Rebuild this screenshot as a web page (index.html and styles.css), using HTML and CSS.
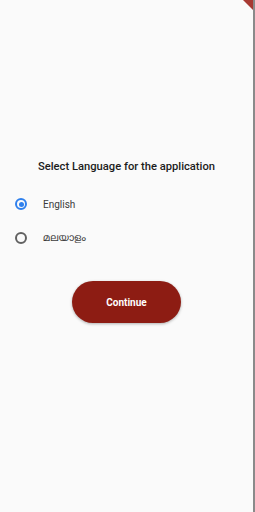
FILE: index.html
```html
<html><head><title>Select Language</title><link rel="stylesheet" href="styles.css"></head>
<body>
<div class='screen'>
  <div class='title'>Select Language for the application</div>
  <div class='options'>
    <label class='option'><span class='radio checked'></span><span class='label'>English</span></label>
    <label class='option'><span class='radio'></span><span class='label ml'>മലയാളം</span></label>
  </div>
  <div class='actions'><button class='continue'>Continue</button></div>
</div>
<div class='banner'></div>
<div class='edge'></div>
</body></html>
```

FILE: styles.css
```css
body { margin: 0; background-color: #fafafa; font-family: Roboto, 'Noto Sans', sans-serif; }
.screen { width: 253px; height: 512px; display: flex; flex-direction: column; padding-top: 159px; box-sizing: border-box; }
.title { text-align: center; font-size: 11.2px; font-weight: 500; color: #1c1c1c; height: 16px; line-height: 16px; }
.options { margin-top: 19px; display: flex; flex-direction: column; gap: 14px; }
.option { display: flex; align-items: center; height: 20px; padding-left: 15px; }
.radio {
  width: 8px; height: 8px; border-radius: 50%;
  border: 2px solid #616161; box-sizing: content-box;
  display: inline-block; position: relative;
  }
.radio.checked { border-color: #2f80ed; }
.radio.checked::after {
  content: ''; position: absolute; left: 1.5px; top: 1.5px; width: 5px; height: 5px;
  border-radius: 50%; background-color: #2f80ed;
  }
.label { margin-left: 16px; font-size: 10px; color: #3a3a3a; }
.ml { font-family: 'Noto Sans Malayalam', 'Noto Sans', sans-serif; }
.actions { margin-top: 33px; display: flex; justify-content: center; }
.continue {
  width: 109px; height: 42px; border: none; border-radius: 21px;
  background-color: #8d1c13; color: #ffffff; font-family: Roboto, sans-serif;
  font-size: 10px; font-weight: 700;
  box-shadow: 0 1px 3px rgba(0,0,0,0.3);
  }
.banner {
  position: absolute; top: 0; right: 2px; width: 0; height: 0;
  border-top: 10px solid #a83a33; border-left: 10px solid transparent;
  }
.edge { position: absolute; top: 0; right: 0; width: 2px; height: 512px; background-color: #8a8a8a; }
```
